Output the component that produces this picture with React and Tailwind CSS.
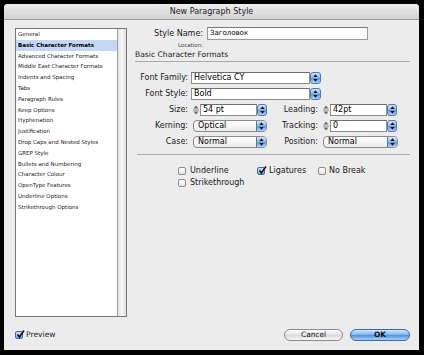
import React from 'react'

const sections = [
    'General',
    'Basic Character Formats',
    'Advanced Character Formats',
    'Middle East Character Formats',
    'Indents and Spacing',
    'Tabs',
    'Paragraph Rules',
    'Keep Options',
    'Hyphenation',
    'Justification',
    'Drop Caps and Nested Styles',
    'GREP Style',
    'Bullets and Numbering',
    'Character Colour',
    'OpenType Features',
    'Underline Options',
    'Strikethrough Options',
]

function UpDown() {
    return (
        <svg width="5" height="8" viewBox="0 0 5 8">
            <polygon points="2.5,0.3 0.3,3 4.7,3" fill="#111" />
            <polygon points="0.3,5 4.7,5 2.5,7.7" fill="#111" />
        </svg>
    )
}

function BlueEnd({ w = 'w-[10px]', round = 'rounded-[3px]' }) {
    return (
        <div className={`${w} h-full ${round} border border-[#4f78ad] bg-[linear-gradient(to_bottom,#d6e8fb,#8dbdf0_45%,#5b9be6_55%,#b3d6f8)] flex items-center justify-center shrink-0`}>
            <UpDown />
        </div>
    )
}

function StepArrows() {
    return (
        <svg width="6" height="10" viewBox="0 0 6 10" className="shrink-0">
            <polygon points="3,0.5 0.5,3.5 5.5,3.5" fill="#6a6a6a" />
            <line x1="0" y1="5" x2="6" y2="5" stroke="#8a8a8a" strokeWidth="1" />
            <polygon points="0.5,6.5 5.5,6.5 3,9.5" fill="#6a6a6a" />
        </svg>
    )
}

function Checkbox({ checked }) {
    if (checked) {
        return (
            <div className="w-[8px] h-[8px] rounded-[2px] border border-[#46699c] bg-[linear-gradient(to_bottom,#cfe2f8,#6fa6e8)] relative shrink-0">
                <svg width="9" height="9" viewBox="0 0 9 9" className="absolute -top-[2px] left-0">
                    <path d="M1.5 4.5 L3.5 7 L8 0.5" fill="none" stroke="#111" strokeWidth="1.6" />
                </svg>
            </div>
        )
    }
    return <div className="w-[8px] h-[8px] rounded-[2px] border border-[#8c8c8c] bg-[linear-gradient(to_bottom,#ffffff,#e6e6e6)] shrink-0" />
}

function Combo({ value, w }) {
    return (
        <div className="flex h-[12px] ml-[3px]">
            <div className={`${w} h-full bg-white border border-[#8e8e8e] border-t-[#6f6f6f] pl-[2px] leading-[10px] text-[8px] text-black`}>{value}</div>
            <BlueEnd w="w-[11px]" />
        </div>
    )
}

function Stepper({ value, w }) {
    return (
        <div className="flex items-center h-[12px] ml-[5px]">
            <StepArrows />
            <div className={`${w} ml-[1px] h-full bg-white border border-[#8e8e8e] border-t-[#6f6f6f] pl-[2px] leading-[10px] text-[8px] text-black`}>{value}</div>
            <BlueEnd />
        </div>
    )
}

function Popup({ value, w }) {
    return (
        <div className={`${w} ml-[5px] h-[12px] flex rounded-[4px] border border-[#8a8a8a] bg-[linear-gradient(to_bottom,#ffffff,#ececec)] overflow-hidden`}>
            <div className="flex-1 pl-[4px] leading-[10px] text-[8px] text-black">{value}</div>
            <div className="w-[10px] h-full border-l border-[#4f78ad] bg-[linear-gradient(to_bottom,#d6e8fb,#8dbdf0_45%,#5b9be6_55%,#b3d6f8)] flex items-center justify-center">
                <UpDown />
            </div>
        </div>
    )
}

function Label({ children, w = 'w-[57px]' }) {
    return <div className={`${w} shrink-0 text-right text-[8px] text-[#1a1a1a] leading-[12px]`}>{children}</div>
}

export default function App() {
    return (
        <div className="w-[424px] h-[355px] bg-black pt-[4px] pl-[4px] font-['DejaVu_Sans',sans-serif] overflow-hidden">
            <div className="w-[415px] h-[346px] bg-[#ececec] rounded-t-[4px] flex flex-col overflow-hidden">
                {/* title bar */}
                <div className="h-[16px] shrink-0 bg-[linear-gradient(to_bottom,#eeeeee,#d3d3d3)] border-b border-[#9c9c9c] flex items-center justify-center text-[8px] text-[#222]">
                    New Paragraph Style
                </div>

                <div className="flex-1 flex flex-col pl-[11px] pr-[9px]">
                    <div className="flex h-[297px] shrink-0">
                        {/* section list */}
                        <div className="mt-[8px] w-[112px] h-[289px] border border-[#777] bg-white flex">
                            <div className="flex-1">
                                {sections.map((s, i) => (
                                    <div
                                        key={s}
                                        className={`h-[10.8px] leading-[10.8px] pl-[2px] text-[5.5px] whitespace-nowrap ${i === 1 ? 'bg-[#c4d8f3] font-bold text-black' : 'text-[#222]'}`}
                                    >
                                        {s}
                                    </div>
                                ))}
                            </div>
                            <div className="w-[9px] border-l border-[#9a9a9a] bg-[linear-gradient(to_right,#e4e4e4,#f6f6f6,#dedede)]" />
                        </div>

                        {/* settings */}
                        <div className="ml-[4px] flex-1 pt-[7px] flex flex-col">
                            <div className="flex items-center h-[13px]">
                                <div className="w-[72px] text-right text-[8px] text-[#1a1a1a]">Style Name:</div>
                                <div className="ml-[4px] w-[161px] h-[13px] bg-white border border-[#9a9a9a] border-t-[#777] pl-[2px] leading-[11px] text-[7px] text-black">
                                    Заголовок
                                </div>
                            </div>
                            <div className="mt-[2px] h-[6px] w-[72px] text-right text-[5.5px] leading-[6px] text-[#444]">Location:</div>
                            <div className="mt-[2px] ml-[4px] h-[12px] border-b border-[#a9a9a9] text-[7.6px] leading-[10px] text-[#1a1a1a]">
                                Basic Character Formats
                            </div>

                            <div className="mt-[10px] flex h-[12px]">
                                <Label>Font Family:</Label>
                                <Combo value="Helvetica CY" w="w-[119px]" />
                            </div>
                            <div className="mt-[4px] flex h-[12px]">
                                <Label>Font Style:</Label>
                                <Combo value="Bold" w="w-[119px]" />
                            </div>
                            <div className="mt-[4px] flex h-[12px]">
                                <Label>Size:</Label>
                                <Stepper value="54 pt" w="w-[57px]" />
                                <Label w="w-[51px]">Leading:</Label>
                                <Stepper value="42pt" w="w-[57px]" />
                            </div>
                            <div className="mt-[4px] flex h-[12px]">
                                <Label>Kerning:</Label>
                                <Popup value="Optical" w="w-[74px]" />
                                <Label w="w-[51px]">Tracking:</Label>
                                <Stepper value="0" w="w-[57px]" />
                            </div>
                            <div className="mt-[4px] flex h-[12px]">
                                <Label>Case:</Label>
                                <Popup value="Normal" w="w-[74px]" />
                                <Label w="w-[51px]">Position:</Label>
                                <Popup value="Normal" w="w-[75px]" />
                            </div>

                            <div className="mt-[6px] ml-[6px] border-t border-[#ababab]" />

                            <div className="mt-[10px] ml-[47px] grid grid-cols-[79px_61px_auto] text-[8px] text-[#1a1a1a]">
                                <div className="h-[12px] flex items-center gap-[4px]"><Checkbox />Underline</div>
                                <div className="h-[12px] flex items-center gap-[4px]"><Checkbox checked />Ligatures</div>
                                <div className="h-[12px] flex items-center gap-[3px]"><Checkbox />No Break</div>
                                <div className="h-[12px] flex items-center gap-[4px]"><Checkbox />Strikethrough</div>
                            </div>
                        </div>
                    </div>

                    {/* footer */}
                    <div className="mt-[11px] h-[14px] flex items-center">
                        <div className="flex items-center gap-[3px] text-[7.6px] text-[#1a1a1a]">
                            <Checkbox checked />
                            Preview
                        </div>
                        <div className="ml-auto flex items-center gap-[7px] -mt-[1px]">
                            <div className="w-[59px] h-[12px] rounded-full border border-[#8a8a8a] bg-[linear-gradient(to_bottom,#ffffff,#e4e4e4_50%,#d8d8d8_51%,#fafafa)] flex items-center justify-center text-[7.4px] text-[#111]">
                                Cancel
                            </div>
                            <div className="w-[60px] h-[12px] rounded-full border border-[#3f6aa6] bg-[linear-gradient(to_bottom,#d2e6fb,#7fb3ee_48%,#4d90e2_52%,#a9d2f8)] flex items-center justify-center text-[7.4px] font-bold text-[#111]">
                                OK
                            </div>
                        </div>
                    </div>
                </div>
            </div>
        </div>
    )
}
